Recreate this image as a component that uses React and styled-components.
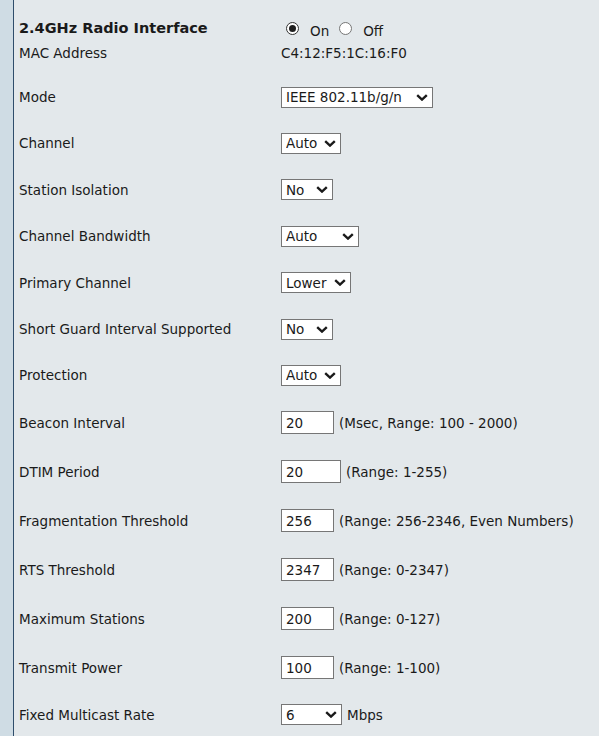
import React from 'react'
import styled, { createGlobalStyle } from 'styled-components'

const GlobalStyle = createGlobalStyle`
  html, body {
    margin: 0;
    padding: 0;
    height: 100%;
    overflow: hidden;
  }
  body {
    background: #e3e8eb;
    font-family: "DejaVu Sans", Verdana, sans-serif;
    font-size: 13.5px;
    color: #1a1a1a;
  }
`

const Page = styled.div`
  display: flex;
  min-height: 100vh;
`

const Sidebar = styled.div`
  flex: none;
  width: 13px;
  background: #cfdce4;
  border-right: 1px solid #2f4d6b;
`

const Main = styled.div`
  flex: 1;
  padding: 16px 0 0 5px;
`

const Row = styled.div`
  display: grid;
  grid-template-columns: 262px 1fr;
  align-items: center;
  height: ${p => p.$h}px;
`

const Spacer = styled.div`
  height: ${p => p.$h}px;
`

const Title = styled.div`
  font-weight: bold;
  font-size: 14.5px;
`

const Label = styled.div`
  white-space: nowrap;
`

const Value = styled.div`
  display: flex;
  align-items: center;
  white-space: nowrap;
`

const Radio = styled.span`
  flex: none;
  width: 13px;
  height: 13px;
  box-sizing: border-box;
  border-radius: 50%;
  border: 1px solid ${p => (p.$on ? '#333' : '#767676')};
  background: #fff;
  margin: 0 11px 0 5px;
  display: inline-flex;
  align-items: center;
  justify-content: center;

  &::after {
    content: '';
    width: 7px;
    height: 7px;
    border-radius: 50%;
    background: ${p => (p.$on ? '#1f1f1f' : 'transparent')};
  }
`

const RadioText = styled.span`
  margin-top: 5px;
  margin-right: 5px;
`

const SelectWrap = styled.div`
  position: relative;
  width: ${p => p.$w}px;
  height: 21px;
`

const NativeSelect = styled.select`
  appearance: none;
  -webkit-appearance: none;
  width: 100%;
  height: 100%;
  box-sizing: border-box;
  margin: 0;
  padding: 0 0 0 4px;
  border: 1px solid #767676;
  border-radius: 0;
  background: #fff;
  font-family: "DejaVu Sans", Verdana, sans-serif;
  font-size: 13.5px;
  color: #1a1a1a;
  outline: none;
`

const Chevron = styled.svg`
  position: absolute;
  right: 5px;
  top: 7px;
  pointer-events: none;
`

const TextInput = styled.input`
  width: ${p => p.$w}px;
  height: 23px;
  box-sizing: border-box;
  margin: 0;
  padding: 0 0 0 4px;
  border: 1px solid #767676;
  border-radius: 0;
  background: #fff;
  font-family: "DejaVu Sans", Verdana, sans-serif;
  font-size: 13.5px;
  color: #1a1a1a;
  outline: none;
`

const Hint = styled.span`
  margin-left: 5px;
`

function Select({ width, value }) {
  return (
    <SelectWrap $w={width}>
      <NativeSelect defaultValue={value}>
        <option>{value}</option>
      </NativeSelect>
      <Chevron width="12" height="7" viewBox="0 0 12 7">
        <path d="M1.2 1.2 L6 5.6 L10.8 1.2" fill="none" stroke="#1a1a1a" strokeWidth="2.4" />
      </Chevron>
    </SelectWrap>
  )
}

const selectRows = [
  { label: 'Mode', value: 'IEEE 802.11b/g/n', w: 152, h: 46 },
  { label: 'Channel', value: 'Auto', w: 60, h: 46 },
  { label: 'Station Isolation', value: 'No', w: 52, h: 47 },
  { label: 'Channel Bandwidth', value: 'Auto', w: 78, h: 46 },
  { label: 'Primary Channel', value: 'Lower', w: 70, h: 47 },
  { label: 'Short Guard Interval Supported', value: 'No', w: 52, h: 46 },
  { label: 'Protection', value: 'Auto', w: 60, h: 46 },
]

const inputRows = [
  { label: 'Beacon Interval', value: '20', w: 53, hint: '(Msec, Range: 100 - 2000)' },
  { label: 'DTIM Period', value: '20', w: 60, hint: '(Range: 1-255)' },
  { label: 'Fragmentation Threshold', value: '256', w: 53, hint: '(Range: 256-2346, Even Numbers)' },
  { label: 'RTS Threshold', value: '2347', w: 53, hint: '(Range: 0-2347)' },
  { label: 'Maximum Stations', value: '200', w: 53, hint: '(Range: 0-127)' },
  { label: 'Transmit Power', value: '100', w: 53, hint: '(Range: 1-100)' },
]

export default function App() {
  return (
    <>
      <GlobalStyle />
      <Page>
        <Sidebar />
        <Main>
          <Row $h={24}>
            <Title>2.4GHz Radio Interface</Title>
            <Value>
              <Radio $on />
              <RadioText>On</RadioText>
              <Radio />
              <RadioText>Off</RadioText>
            </Value>
          </Row>
          <Row $h={26}>
            <Label>MAC Address</Label>
            <Value>C4:12:F5:1C:16:F0</Value>
          </Row>
          <Spacer $h={8} />
          {selectRows.map(r => (
            <Row key={r.label} $h={r.h}>
              <Label>{r.label}</Label>
              <Value>
                <Select width={r.w} value={r.value} />
              </Value>
            </Row>
          ))}
          {inputRows.map(r => (
            <Row key={r.label} $h={49}>
              <Label>{r.label}</Label>
              <Value>
                <TextInput $w={r.w} defaultValue={r.value} />
                <Hint>{r.hint}</Hint>
              </Value>
            </Row>
          ))}
          <Row $h={45}>
            <Label>Fixed Multicast Rate</Label>
            <Value>
              <Select width={61} value="6" />
              <Hint>Mbps</Hint>
            </Value>
          </Row>
        </Main>
      </Page>
    </>
  )
}
